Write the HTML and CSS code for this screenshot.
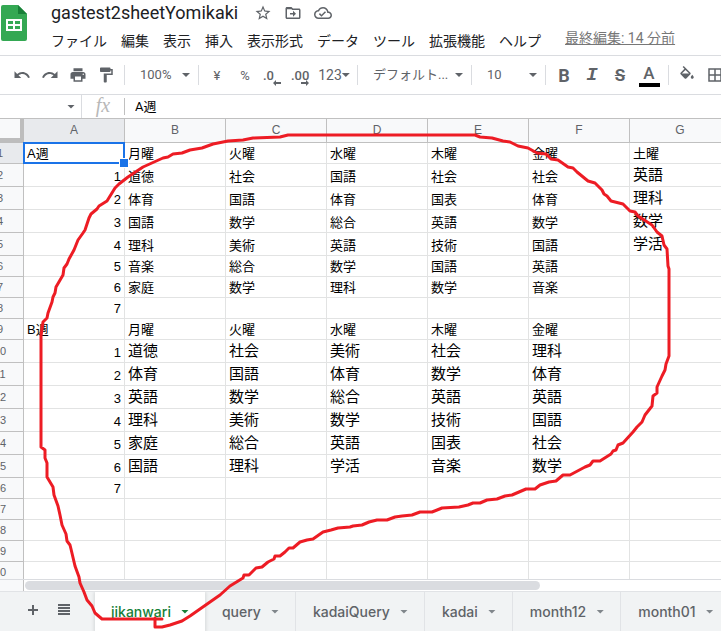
FILE: index.html
```html
<!DOCTYPE html>
<html lang="ja">
<head>
<meta charset="utf-8">
<title>gastest2sheetYomikaki</title>
<link rel="stylesheet" href="styles.css">
</head>
<body>
<header class="top">
  <svg class="logo" viewBox="0 0 26 36" aria-hidden="true">
    <path fill="#34a853" d="M2 0h15l9 9v25a2 2 0 0 1-2 2H2a2 2 0 0 1-2-2V2a2 2 0 0 1 2-2z"/>
    <path fill="#188038" d="M17 0l9 9h-9z"/>
    <path fill="#fff" fill-rule="evenodd" d="M5 14h16v12H5zM7 16v3h5v-3zM14 16v3h5v-3zM7 21v3h5v-3zM14 21v3h5v-3z"/>
  </svg>
  <div class="head">
    <div class="title-row">
      <input class="title" type="text" aria-label="名前" value="gastest2sheetYomikaki">
      <button class="mini" aria-label="スター"><svg viewBox="0 0 24 24"><path d="M22 9.24l-7.19-.62L12 2 9.19 8.63 2 9.24l5.46 4.73L5.82 21 12 17.27 18.18 21l-1.63-7.03L22 9.24zM12 15.4l-3.76 2.27 1-4.28-3.32-2.88 4.38-.38L12 6.1l1.71 4.04 4.38.38-3.32 2.88 1 4.28L12 15.4z"/></svg></button>
      <button class="mini" aria-label="移動"><svg viewBox="0 0 24 24"><path d="M20 6h-8l-2-2H4c-1.100 0-2 .9-2 2v12c0 1.100.9 2 2 2h16c1.100 0 2-.9 2-2V8c0-1.100-.9-2-2-2zm0 12H4V7h6l1 1h9v10zm-8-1l4-4-4-4v3H8v2h4z"/></svg></button>
      <button class="mini" aria-label="保存状況"><svg viewBox="0 0 24 24"><path d="M19.350 10.040C18.670 6.590 15.640 4 12 4 9.110 4 6.610 5.640 5.360 8.040 2.350 8.360 0 10.910 0 14c0 3.310 2.690 6 6 6h13c2.760 0 5-2.240 5-5 0-2.640-2.050-4.780-4.650-4.960zM19 18H6c-2.210 0-4-1.790-4-4 0-2.050 1.530-3.760 3.560-3.970l1.070-.11.5-.95C8.080 7.140 9.940 6 12 6c2.620 0 4.880 1.860 5.390 4.430l.3 1.500 1.530.11c1.560.1 2.780 1.410 2.780 2.960 0 1.650-1.350 3-3 3zm-9-3.820l-2.090-2.090L6.500 13.500 10 17l6.010-6.010-1.410-1.410z"/></svg></button>
    </div>
    <nav class="menus">
      <button>ファイル</button><button>編集</button><button>表示</button><button>挿入</button><button>表示形式</button><button>データ</button><button>ツール</button><button>拡張機能</button><button>ヘルプ</button>
      <a class="edited" href="#">最終編集: 14 分前</a>
    </nav>
  </div>
</header>

<div class="toolbar" role="toolbar">
  <button aria-label="元に戻す"><svg viewBox="0 0 24 24"><path d="M12.500 8c-2.650 0-5.050.99-6.900 2.600L2 7v9h9l-3.620-3.620c1.390-1.160 3.160-1.880 5.120-1.880 3.540 0 6.550 2.310 7.600 5.500l2.370-.78C21.080 11.030 17.150 8 12.500 8z"/></svg></button>
  <button aria-label="やり直し"><svg viewBox="0 0 24 24"><path d="M18.400 10.600C16.550 8.990 14.150 8 11.500 8c-4.650 0-8.580 3.030-9.960 7.220L3.900 16c1.050-3.190 4.050-5.500 7.600-5.500 1.950 0 3.730.72 5.120 1.880L13 16h9V7l-3.600 3.600z"/></svg></button>
  <button aria-label="印刷"><svg class="wide" viewBox="0 0 24 24"><path d="M19 8H5c-1.660 0-3 1.340-3 3v6h4v4h12v-4h4v-6c0-1.660-1.340-3-3-3zm-3 11H8v-5h8v5zm3-7c-.55 0-1-.45-1-1s.45-1 1-1 1 .45 1 1-.45 1-1 1zm-1-9H6v4h12V3z"/></svg></button>
  <button aria-label="書式を貼り付け"><svg viewBox="0 0 24 24"><path d="M18 4V3c0-.55-.45-1-1-1H5c-.55 0-1 .45-1 1v4c0 .55.45 1 1 1h12c.55 0 1-.45 1-1V6h1v4H9v11c0 .55.45 1 1 1h2c.55 0 1-.45 1-1v-9h8V4h-3z"/></svg></button>
  <span class="sep"></span>
  <span class="pick"><select aria-label="ズーム"><option>100%</option></select><i class="caret"></i></span>
  <span class="sep"></span>
  <button>¥</button>
  <button>%</button>
  <button class="dec" aria-label="小数点以下の桁数を減らす">.0<svg viewBox="0 0 8 6"><path d="M3 0v2h5v2H3v2L0 3z"/></svg></button>
  <button class="dec" aria-label="小数点以下の桁数を増やす">.00<svg viewBox="0 0 8 6"><path d="M5 0v2H0v2h5v2l3-3z"/></svg></button>
  <button class="num">123<i class="caret"></i></button>
  <span class="sep"></span>
  <span class="pick font"><select aria-label="フォント"><option>デフォルト...</option></select><i class="caret"></i></span>
  <span class="sep"></span>
  <span class="pick"><select aria-label="フォントサイズ"><option>10</option></select><i class="caret"></i></span>
  <span class="sep"></span>
  <button class="bold">B</button>
  <button class="italic">I</button>
  <button class="strike">S</button>
  <button class="color"><span>A</span></button>
  <span class="sep"></span>
  <button aria-label="塗りつぶしの色"><svg viewBox="0 0 24 24"><path d="M16.560 8.940L7.620 0 6.210 1.410l2.380 2.380-5.150 5.150c-.59.59-.59 1.540 0 2.120l5.500 5.500c.29.29.68.44 1.060.44s.77-.15 1.060-.44l5.500-5.500c.59-.58.59-1.530 0-2.120zM5.210 10L10 5.210 14.790 10H5.210zM19 11.500s-2 2.170-2 3.500c0 1.100.9 2 2 2s2-.9 2-2c0-1.330-2-3.500-2-3.500z"/></svg></button>
  <button aria-label="枠線"><svg viewBox="0 0 24 24"><path d="M3 3v18h18V3H3zm8 16H5v-6h6v6zm0-8H5V5h6v6zm8 8h-6v-6h6v6zm0-8h-6V5h6v6z"/></svg></button>
</div>

<div class="formula">
  <button class="namebox" aria-label="名前ボックス"><i class="caret"></i></button>
  <label class="fx" for="fx">fx</label>
  <input id="fx" type="text" value="A週">
</div>

<main class="grid">
  <table>
    <colgroup><col class="rowhead"><col><col><col><col><col><col><col></colgroup>
    <thead><tr><th class="corner"></th><th class="on">A</th><th>B</th><th>C</th><th>D</th><th>E</th><th>F</th><th>G</th></tr></thead>
    <tbody>
      <tr><th class="on">1</th><td class="active">A週</td><td>月曜</td><td>火曜</td><td>水曜</td><td>木曜</td><td>金曜</td><td>土曜</td></tr>
      <tr class="tall"><th>2</th><td>1</td><td>道徳</td><td>社会</td><td>国語</td><td>社会</td><td>社会</td><td class="lg">英語</td></tr>
      <tr class="tall"><th>3</th><td>2</td><td>体育</td><td>国語</td><td>体育</td><td>国表</td><td>体育</td><td class="lg">理科</td></tr>
      <tr class="tall"><th>4</th><td>3</td><td>国語</td><td>数学</td><td>総合</td><td>英語</td><td>数学</td><td class="lg">数学</td></tr>
      <tr class="tall"><th>5</th><td>4</td><td>理科</td><td>美術</td><td>英語</td><td>技術</td><td>国語</td><td class="lg">学活</td></tr>
      <tr><th>6</th><td class="n">5</td><td>音楽</td><td>総合</td><td>数学</td><td>国語</td><td>英語</td><td></td></tr>
      <tr><th>7</th><td class="n">6</td><td>家庭</td><td>数学</td><td>理科</td><td>数学</td><td>音楽</td><td></td></tr>
      <tr><th>8</th><td class="n">7</td><td></td><td></td><td></td><td></td><td></td><td></td></tr>
      <tr><th>9</th><td>B週</td><td>月曜</td><td>火曜</td><td>水曜</td><td>木曜</td><td>金曜</td><td></td></tr>
      <tr class="tall big"><th>10</th><td>1</td><td>道徳</td><td>社会</td><td>美術</td><td>社会</td><td>理科</td><td></td></tr>
      <tr class="tall big"><th>11</th><td>2</td><td>体育</td><td>国語</td><td>体育</td><td>数学</td><td>体育</td><td></td></tr>
      <tr class="tall big"><th>12</th><td>3</td><td>英語</td><td>数学</td><td>総合</td><td>英語</td><td>英語</td><td></td></tr>
      <tr class="tall big"><th>13</th><td>4</td><td>理科</td><td>美術</td><td>数学</td><td>技術</td><td>国語</td><td></td></tr>
      <tr class="tall big"><th>14</th><td>5</td><td>家庭</td><td>総合</td><td>英語</td><td>国表</td><td>社会</td><td></td></tr>
      <tr class="tall big"><th>15</th><td>6</td><td>国語</td><td>理科</td><td>学活</td><td>音楽</td><td>数学</td><td></td></tr>
      <tr><th>16</th><td class="n">7</td><td></td><td></td><td></td><td></td><td></td><td></td></tr>
      <tr><th>17</th><td></td><td></td><td></td><td></td><td></td><td></td><td></td></tr>
      <tr><th>18</th><td></td><td></td><td></td><td></td><td></td><td></td><td></td></tr>
      <tr><th>19</th><td></td><td></td><td></td><td></td><td></td><td></td><td></td></tr>
      <tr><th>20</th><td></td><td></td><td></td><td></td><td></td><td></td><td></td></tr>
    </tbody>
  </table>
</main>
<div class="scroll"><div class="track"><div class="thumb"></div></div></div>

<footer class="tabs">
  <button class="tool" aria-label="シートを追加"><svg viewBox="0 0 12 12"><path d="M5 1h2v4h4v2H7v4H5V7H1V5h4z"/></svg></button>
  <button class="tool" aria-label="すべてのシート"><svg viewBox="0 0 12 12"><path d="M0 0h12v2H0zM0 3h12v2H0zM0 6h12v2H0zM0 9h12v2H0z"/></svg></button>
  <button class="tab current">jikanwari<i class="caret"></i></button>
  <button class="tab">query<i class="caret"></i></button>
  <button class="tab">kadaiQuery<i class="caret"></i></button>
  <button class="tab">kadai<i class="caret"></i></button>
  <button class="tab">month12<i class="caret"></i></button>
  <button class="tab">month01<i class="caret"></i></button>
</footer>

<svg class="ink" width="721" height="631" viewBox="0 0 721 631" aria-hidden="true">
  <polyline points="162,619 102,619 95,613 92,606 87,600 84,592 80,583 79,577 75,566 71,549 70,545 67,541 66,534 62,525 60,515 58,506 54,495 53,487 50,482 47,477 47,463 45,458 45,450 41,447 41,336 43,322 47,318 48,313 52,302 53,297 55,293 56,287 63,275 64,268 67,264 69,259 74,250 78,240 83,233 85,230 89,218 91,214 97,209 99,206 107,201 115,188 119,184 128,177 143,167 163,158 168,157 173,154 182,153 190,150 202,148 213,144 228,141 243,140 253,138 280,137 288,135 475,135 480,137 492,138 503,141 510,142 518,146 528,148 537,153 546,154 551,159 558,160 568,167 573,168 577,172 588,181 595,183 602,190 604,194 607,196 611,201 623,204 630,211 635,212 638,216 652,225 657,232 662,236 664,245 667,249 668,266 669,269 669,356 666,364 665,370 662,376 657,387 657,393 653,396 652,406 645,415 642,422 637,427 633,432 623,443 618,445 616,450 613,451 611,454 600,461 593,461 590,465 585,467 570,475 563,475 556,481 549,482 540,485 535,489 526,489 512,495 505,496 497,499 487,500 480,503 473,503 468,505 459,507 442,508 432,512 420,512 412,515 402,516 395,517 387,520 377,520 369,522 362,525 353,526 350,527 338,528 331,530 323,532 313,539 307,540 300,542 293,548 289,548 285,552 280,556 275,556 274,559 268,562 262,567 256,568 253,571 249,575 244,575 243,578 230,586 220,595 210,602 200,609 190,616 182,621 170,625 162,627 155,627 155,618"/>
</svg>
</body>
</html>
```
FILE: styles.css
```css
* { box-sizing: border-box; }

body {
  margin: 0;
  height: 100vh;
  display: flex;
  flex-direction: column;
  position: relative;
  overflow: hidden;
  background: #fff;
  color: #000;
  font-family: Roboto, "Noto Sans CJK JP", sans-serif;
}

button, input, select {
  margin: 0;
  padding: 0;
  border: 0;
  background: none;
  color: inherit;
  font: inherit;
  appearance: none;
  outline: 0;
}

svg { display: block; fill: currentColor; }

.caret {
  flex: none;
  width: 8px;
  height: 4px;
  background: currentColor;
  clip-path: polygon(0 0, 100% 0, 50% 100%);
}

/* Title and menus */
.top {
  flex: none;
  display: flex;
  height: 56px;
  border-bottom: 1px solid #dadce0;
}
.logo { flex: none; width: 26px; height: 36px; margin: 5px 24px 0 1px; }
.head { flex: 1; min-width: 0; }
.title-row { display: flex; align-items: center; height: 26px; color: #5f6368; }
.title { width: 201px; font-size: 18px; line-height: 24px; color: #202124; }
.mini { display: grid; place-items: center; width: 22px; height: 26px; margin-right: 8px; }
.mini svg { width: 18px; height: 18px; }
.menus {
  display: flex;
  align-items: center;
  gap: 14px;
  height: 30px;
  font-size: 14px;
  line-height: 20px;
  white-space: nowrap;
  color: #202124;
}
.edited { margin: -6px 0 0 10px; color: #777; }

/* Toolbar */
.toolbar {
  flex: none;
  display: flex;
  align-items: center;
  height: 39px;
  padding-left: 8px;
  border-bottom: 1px solid #dadce0;
  color: #5f6368;
  font-size: 13px;
  overflow: hidden;
}
.toolbar button {
  flex: none;
  display: flex;
  align-items: center;
  justify-content: center;
  width: 28px;
  height: 28px;
}
.toolbar svg { width: 18px; height: 18px; }
.sep { flex: none; width: 1px; height: 20px; margin: 0 4px; background: #dadce0; }
.pick { flex: none; display: flex; align-items: center; width: 65px; padding: 0 4px 0 11px; }
.pick select { flex: 1; min-width: 0; line-height: 20px; }
.pick.font { width: 105px; }
.toolbar .dec {
  position: relative;
  justify-content: flex-start;
  padding-left: 4px;
  font-size: 13px;
  font-weight: 500;
}
.toolbar .dec svg { position: absolute; right: 6px; bottom: 3px; width: 8px; height: 6px; }
.toolbar .num { width: 38px; font-size: 14px; }
.toolbar .bold { font-size: 18px; font-weight: 700; }
.toolbar .italic { font: italic bold 19px "Liberation Mono", monospace; }
.toolbar .strike { font-size: 17px; font-weight: 700; text-decoration: line-through; }
.toolbar .color { width: 30px; font-size: 17px; font-weight: 500; }
.color span { width: 21px; line-height: 20px; border-bottom: 4px solid #000; text-align: center; }

/* Formula bar */
.formula {
  flex: none;
  display: flex;
  align-items: center;
  height: 24px;
  border-bottom: 1px solid #c0c0c0;
  font-size: 13px;
}
.namebox {
  display: flex;
  align-items: center;
  justify-content: flex-end;
  width: 82px;
  height: 23px;
  padding-right: 6px;
  border-right: 1px solid #dadce0;
  color: #5f6368;
}
.fx {
  width: 43px;
  height: 17px;
  border-right: 1px solid #c0c0c0;
  text-align: center;
  font: italic 20px/14px "Liberation Serif", serif;
  color: #b8b8b8;
}
.formula input { flex: 1; min-width: 0; padding-left: 10px; line-height: 20px; }

/* Sheet */
.grid { flex: 1; min-height: 0; overflow: hidden; }
table {
  width: 754px;
  margin-left: -23px;
  table-layout: fixed;
  border-collapse: separate;
  border-spacing: 0;
  font: 13px/15px "Liberation Sans", "Noto Sans CJK JP", sans-serif;
}
col { width: 101px; }
.rowhead { width: 47px; }
th {
  padding: 0;
  border: solid #c0c0c0;
  border-width: 0 1px 1px 0;
  background: #f8f9fa;
  color: #5f6368;
  font-size: 12px;
  font-weight: 400;
}
thead th { height: 24px; }
tbody th { height: 21px; font-size: 11px; }
.tall th { height: 23px; }
.on { background: #e8eaed; }
.corner { border: solid #bdbdbd; border-width: 0 4px 5px 0; }
td {
  padding: 0 3px 2px;
  border: solid #e2e3e3;
  border-width: 0 1px 1px 0;
  vertical-align: bottom;
  white-space: nowrap;
}
.tall td:nth-child(2), .n { text-align: right; }
.big td:nth-child(n+3), .lg { font-size: 15px; line-height: 19px; }
.active { position: relative; }
.active::before {
  content: "";
  position: absolute;
  inset: -1px;
  border: 2px solid #1a73e8;
}
.active::after {
  content: "";
  position: absolute;
  right: -5px;
  bottom: -5px;
  width: 8px;
  height: 8px;
  border: 1px solid #fff;
  background: #1a73e8;
}

.scroll {
  flex: none;
  display: flex;
  height: 12px;
  padding-left: 23px;
  border-top: 1px solid #dadce0;
  background: #f8f9fa;
}
.track { flex: 1; padding: 1px 0 1px 1px; border-left: 1px solid #c0c0c0; background: #fff; }
.thumb { width: 74%; height: 9px; border-radius: 5px; background: #dadce0; }

/* Sheet tabs */
.tabs {
  flex: none;
  display: flex;
  height: 40px;
  padding-left: 17px;
  border-top: 1px solid #e1e3e6;
  background: #f1f3f4;
  color: #5f6368;
  overflow: hidden;
}
.tool { flex: none; display: grid; place-items: center; width: 31px; height: 35px; }
.tool svg { width: 12px; height: 12px; }
.tab {
  flex: none;
  display: flex;
  align-items: center;
  gap: 10px;
  padding: 0 16px 0 17px;
  border-right: 1px solid #e1e3e6;
  font: 500 14px/20px Inter, sans-serif;
}
.tab .caret { color: #80868b; }
.current {
  margin-left: 16px;
  padding: 0 16px;
  border: 0;
  background: #fff;
  color: #188038;
  box-shadow: 0 1px 3px 1px #3c404326;
}
.current .caret { color: #188038; }

/* Freehand mark over the sheet */
.ink { position: absolute; top: 0; left: 0; pointer-events: none; }
.ink polyline {
  fill: none;
  stroke: #ed1c24;
  stroke-width: 3;
  stroke-linecap: round;
  stroke-linejoin: round;
}
```
